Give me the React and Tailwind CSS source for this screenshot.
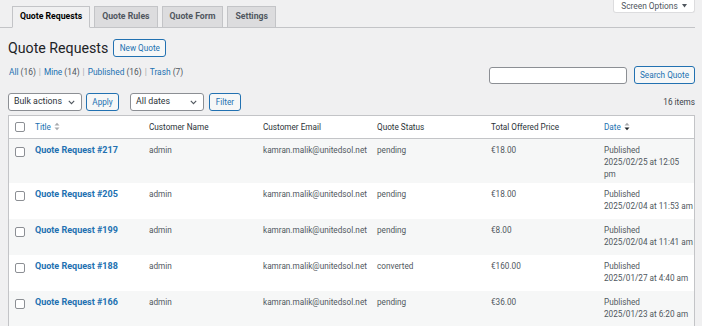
const tabs = ["Quote Requests", "Quote Rules", "Quote Form", "Settings"];

const rows = [
  { id: 217, status: "pending", price: "€18.00", date: ["2025/02/25 at 12:05", "pm"] },
  { id: 205, status: "pending", price: "€18.00", date: ["2025/02/04 at 11:53 am"] },
  { id: 199, status: "pending", price: "€8.00", date: ["2025/02/04 at 11:41 am"] },
  { id: 188, status: "converted", price: "€160.00", date: ["2025/01/27 at 4:40 am"] },
  { id: 166, status: "pending", price: "€36.00", date: ["2025/01/23 at 6:20 am"] },
];

const cols = "grid grid-cols-[20px_114px_114px_114px_114px_114px_1fr]";

const SortIcon = ({ active }) => (
  <svg width="6" height="9" viewBox="0 0 6 9" className="ml-[3px]">
    <path d="M0.5 3.5 L3 0.8 L5.5 3.5 Z" fill="#a7aaad" />
    <path d="M0.5 5.5 L3 8.2 L5.5 5.5 Z" fill={active ? "#1d2327" : "#a7aaad"} />
  </svg>
);

const Checkbox = () => (
  <span className="block h-[10px] w-[10px] rounded-[2px] border border-[#8c8f94] bg-white" />
);

const Chevron = () => (
  <svg width="7" height="5" viewBox="0 0 7 5">
    <path d="M0.8 0.8 L3.5 3.6 L6.2 0.8" fill="none" stroke="#50575e" strokeWidth="1.1" />
  </svg>
);

const Select = ({ label, width }) => (
  <div
    className={`flex h-[18px] items-center justify-between rounded-[3px] border border-[#8c8f94] bg-white pl-[5px] pr-[6px] text-[8.8px] text-[#2c3338] ${width}`}
  >
    <span>{label}</span>
    <Chevron />
  </div>
);

const Button = ({ children, className = "" }) => (
  <button
    className={`flex h-[18px] items-center rounded-[3px] border border-[#2271b1] bg-[#f6f7f7] text-[8.2px] text-[#2271b1] ${className}`}
  >
    {children}
  </button>
);

export default function App() {
  return (
    <div className="min-h-screen bg-[#f0f0f1] font-['Roboto',sans-serif] text-[#3c434a]">
      <div className="mr-[7px] flex items-start border-b border-[#c3c4c7]">
        <div className="ml-[12px] mt-[6px] flex gap-[4px]">
          {tabs.map((t, i) => (
            <div
              key={t}
              className={`-mb-px flex h-[22px] items-center border border-[#c3c4c7] px-[7px] text-[8.7px] font-bold ${
                i === 0
                  ? "border-b-[#f0f0f1] bg-[#f0f0f1] text-black"
                  : "bg-[#dcdcde] text-[#50575e]"
              }`}
            >
              {t}
            </div>
          ))}
        </div>
        <div className="ml-auto flex h-[13px] w-[82px] items-center justify-center gap-[4px] rounded-b-[3px] border border-t-0 border-[#dcdcde] bg-white text-[8.4px] text-[#50575e]">
          Screen Options
          <svg width="5" height="4" viewBox="0 0 5 4">
            <path d="M0 0 L5 0 L2.5 3.5 Z" fill="#50575e" />
          </svg>
        </div>
      </div>

      <div className="pl-[8px] pr-[7px]">
        <div className="mt-[11px] flex items-center gap-[5px]">
          <h1 className="text-[14.2px] leading-[18px] text-[#1d2327]">Quote Requests</h1>
          <Button className="w-[53px] justify-center">New Quote</Button>
        </div>

        <div className="mt-[9px] flex items-start justify-between">
          <div className="ml-px text-[8.4px] leading-[12px] text-[#50575e]">
            <span className="text-[#2271b1]">All</span> (16)
            <span className="px-[3px] text-[#a7aaad]">|</span>
            <span className="text-[#2271b1]">Mine</span> (14)
            <span className="px-[3px] text-[#a7aaad]">|</span>
            <span className="text-[#2271b1]">Published</span> (16)
            <span className="px-[3px] text-[#a7aaad]">|</span>
            <span className="text-[#2271b1]">Trash</span> (7)
          </div>
          <div className="flex items-center gap-[7px]">
            <div className="h-[17px] w-[138px] rounded-[3px] border border-[#8c8f94] bg-white" />
            <Button className="w-[61px] justify-center">Search Quote</Button>
          </div>
        </div>

        <div className="mt-[9px] flex items-center">
          <Select label="Bulk actions" width="w-[74px]" />
          <Button className="ml-[4px] w-[33px] justify-center">Apply</Button>
          <div className="ml-[11px]">
            <Select label="All dates" width="w-[74px]" />
          </div>
          <Button className="ml-[5px] w-[32px] justify-center">Filter</Button>
          <div className="ml-auto text-[8.2px] text-[#3c434a]">16 items</div>
        </div>

        <div className="mt-[4px] border border-[#c3c4c7] bg-white">
          <div className={`${cols} h-[23px] items-center border-b border-[#c3c4c7] text-[8.2px] text-[#2c3338]`}>
            <div className="pl-[6px]">
              <Checkbox />
            </div>
            <div className="flex items-center pl-[6px] text-[#2271b1]">
              Title <SortIcon />
            </div>
            <div className="pl-[6px]">Customer Name</div>
            <div className="pl-[6px]">Customer Email</div>
            <div className="pl-[6px]">Quote Status</div>
            <div className="pl-[6px]">Total Offered Price</div>
            <div className="flex items-center pl-[5px] text-[#2271b1]">
              Date <SortIcon active />
            </div>
          </div>

          {rows.map((r, i) => (
            <div
              key={r.id}
              className={`${cols} min-h-[36px] pb-[3px] pt-[5px] text-[8.2px] leading-[12px] text-[#50575e] ${
                i % 2 === 0 ? "bg-[#f6f7f7]" : "bg-white"
              }`}
            >
              <div className="pl-[6px] pt-[3px]">
                <Checkbox />
              </div>
              <div className="pl-[6px] text-[9px] font-bold text-[#2271b1]">
                Quote Request #{r.id}
              </div>
              <div className="pl-[6px]">admin</div>
              <div className="pl-[6px]">kamran.malik@unitedsol.net</div>
              <div className="pl-[6px]">{r.status}</div>
              <div className="pl-[6px]">{r.price}</div>
              <div className="whitespace-nowrap pl-[5px]">
                <div>Published</div>
                {r.date.map((d) => (
                  <div key={d}>{d}</div>
                ))}
              </div>
            </div>
          ))}
        </div>
      </div>
    </div>
  );
}
